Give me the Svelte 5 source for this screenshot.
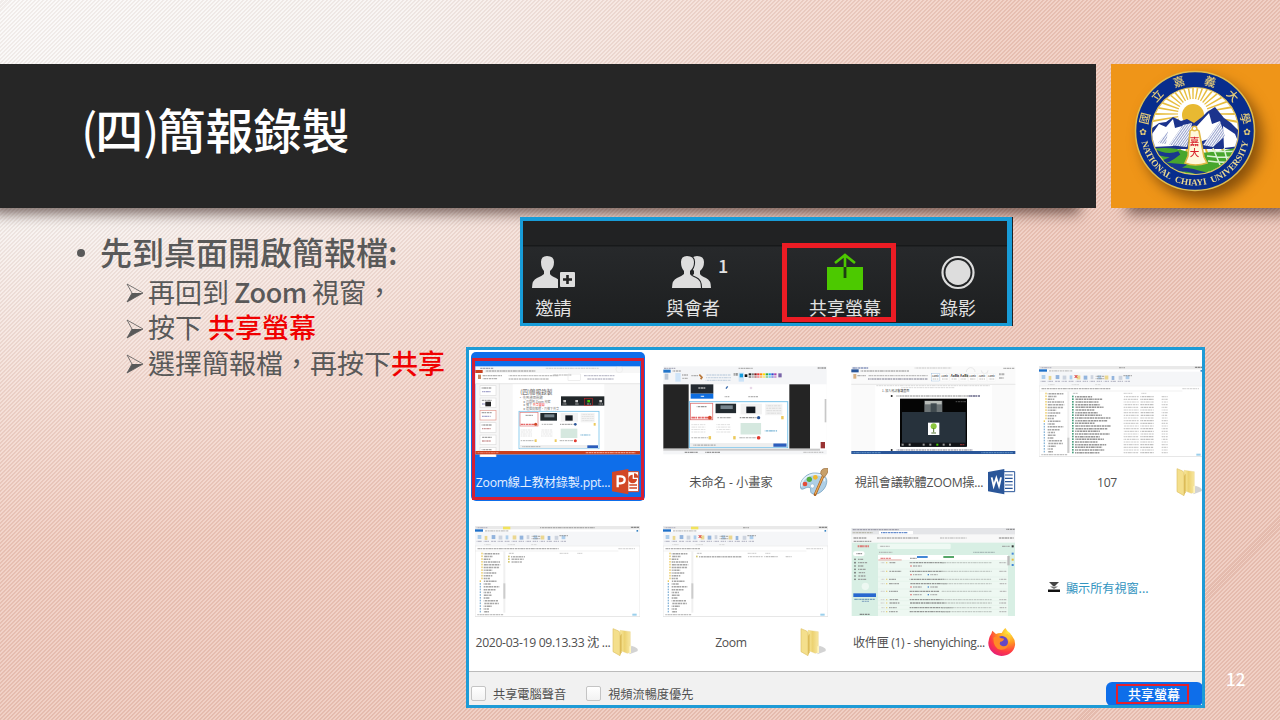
<script>
  const range = (n) => Array.from({ length: n }, (_, i) => i);
  const frac = (n) => {
    const v = Math.sin(n * 12.9898) * 43758.5453;
    return v - Math.floor(v);
  };

  const rays = range(36).map((i) => i * 10);
  const seal = [
    { ch: '國', a: -76 },
    { ch: '立', a: -47 },
    { ch: '嘉', a: -18 },
    { ch: '義', a: 17 },
    { ch: '大', a: 47 },
    { ch: '學', a: 76 }
  ];

  const windows = [
    { kind: 'slides', label: 'Zoom線上教材錄製.ppt...', icon: 'ppt', selected: true, track: -0.22 },
    { kind: 'paint', label: '未命名 - 小畫家', icon: 'paint', track: 0 },
    { kind: 'word', label: '視訊會議軟體ZOOM操...', icon: 'word', track: -0.25 },
    { kind: 'files', label: '107', icon: 'folder', rows: 22, track: -0.3 },
    { kind: 'files', label: '2020-03-19 09.13.33 沈 ...', icon: 'folder', rows: 3, tab: true, track: -0.33 },
    { kind: 'files', label: 'Zoom', icon: 'folder', rows: 1, tab: true, track: -0.3 },
    { kind: 'mail', label: '收件匣 (1) - shenyiching...', icon: 'firefox', track: -0.38 }
  ];

  const swatches = ['#222', '#777', '#8b1a1a', '#e33', '#f80', '#fd0', '#3a4', '#1ad', '#34c', '#a4a'];
</script>

{#snippet micro(x, y, w, color = '#999', h = 4)}
  <line x1={x} y1={y} x2={x + w} y2={y} stroke={color} stroke-width={h} stroke-dasharray="6 1.500 9 1 4 2 7 1.500" stroke-dashoffset={frac(x + y) * 30} opacity=".75" />
{/snippet}

{#snippet person()}
  <path d="M15 3 q-6 0-6 6 q0 6 3 9 v3 q-2 2-7 4 q-5 2-5 10 h29 q0-8-5-10 q-5-2-6-4 v-3 q4-3 4-9 q0-6-7-6z" />
{/snippet}

{#snippet ribbon()}
  <rect x="0" y="17" width="495" height="42" fill="#f5f6f8" />
  {#each range(13) as i}
    <rect x={8 + i * 21} y={27 + frac(i) * 3} width={i % 3 === 1 ? 8 : 11} height="12" fill={['#9cc4e8', '#e8cf75', '#7ba4d6', '#c3ccd8'][i % 4]} opacity=".8" />
    {@render micro(5 + i * 21, 46, 16, '#aab')}
  {/each}
  {@render micro(170, 31, 27)}
  {@render micro(170, 38, 27)}
  {@render micro(253, 29, 26)}
  {@render micro(28, 56, 20, '#ccc', 3)}
  {@render micro(98, 56, 22, '#ccc', 3)}
  {@render micro(168, 56, 18, '#ccc', 3)}
{/snippet}

{#snippet smallCards(x, y, k)}
  <g transform={`translate(${x} ${y}) scale(${k})`}>
    <rect width="240" height="112" fill="#fff" stroke="#7cc5ec" stroke-width="2.5" />
    <rect x="3" y="4" width="54" height="40" fill="#fff" stroke="#d77" stroke-width="2" />
    {@render micro(18, 12, 24, '#777', 3)}
    {@render micro(4, 39, 50, '#d33', 4)}
    <rect x="64" y="5" width="50" height="23" fill="#222b30" />
    <rect x="76" y="9" width="30" height="9" fill="#76858e" />
    <rect x="125" y="5" width="52" height="26" fill="#f2f2f2" />
    <rect x="139" y="12" width="22" height="16" fill="#151b22" />
    <rect x="185" y="5" width="42" height="28" fill="#f3f3f3" />
    {#each range(4) as i}
      {@render micro(188, 10 + i * 6, 36, '#ccc', 2)}
      {@render micro(5, 56 + i * 6, 34, '#ccc', 2)}
      {@render micro(66, 56 + i * 6, 34, '#ccc', 2)}
    {/each}
    <rect x="125" y="52" width="50" height="28" fill="#d5e8df" />
    {@render micro(68, 39, 34, '#999', 3)}
    {@render micro(122, 39, 42, '#777', 3)}
    {@render micro(4, 88, 42, '#999', 3)}
    {@render micro(122, 88, 40, '#999', 3)}
    {@render micro(184, 71, 30, '#4a9bc7', 3)}
    <circle cx="50" cy="39" r="4.500" fill="#d24726" />
    <circle cx="169" cy="39" r="4" fill="#2a5699" />
    <circle cx="169" cy="88" r="4.500" fill="#e33b2e" />
    <rect x="224" y="35" width="6" height="8" fill="#ecc95b" />
    <rect x="47" y="84" width="6" height="8" fill="#ecc95b" />
    <rect x="107" y="84" width="6" height="8" fill="#ecc95b" />
    <rect x="2" y="101" width="236" height="10" fill="#eee" />
    {@render micro(10, 106, 54, '#999', 3)}
    <rect x="205" y="102" width="32" height="8" fill="#2a5dbd" />
  </g>
{/snippet}

{#snippet slidesThumb()}
  <rect width="495" height="264" fill="#f7f7f7" />
  {@render micro(14, 6, 40, '#889')}
  {@render micro(210, 6, 160, '#ccc')}
  <circle cx="432" cy="9" r="10" fill="none" stroke="#ddd" />
  <rect y="11" width="22" height="9" fill="#c8411f" />
  {@render micro(30, 14, 150, '#999')}
  <rect y="20" width="495" height="32" fill="#fff" />
  <rect x="8" y="25" width="9" height="13" fill="#c88a62" />
  {@render micro(22, 28, 58)}
  {@render micro(22, 37, 44)}
  {@render micro(100, 28, 150, '#aaa')}
  {@render micro(100, 38, 120, '#aaa')}
  {@render micro(232, 26, 56, '#bbb')}
  <rect x="278" y="23" width="38" height="19" fill="none" stroke="#ccc" />
  {@render micro(326, 28, 92, '#aab')}
  {@render micro(336, 38, 80, '#aab')}
  <path d="M0 52 H495 M72 52 V255" stroke="#ddd" stroke-width="2" />
  {#each range(6) as i}
    <rect x="14" y={58 + i * 37} width="48" height="29" fill="#fff" stroke={i === 2 ? '#e3958b' : '#ddd'} stroke-width="2" />
    {@render micro(19, 65 + i * 37, 30, '#888')}
    {@render micro(20, 76 + i * 37, 26, i > 2 ? '#b77' : '#88b')}
  {/each}
  <rect x="30" y="106" width="17" height="14" fill="#222" />
  <rect x="112" y="54" width="275" height="200" fill="#fff" />
  <text x="135" y="84" font-size="17" fill="#555">(四)簡報錄製</text>
  <text x="130" y="98" font-size="10" fill="#777">• 先到桌面開啟</text>
  <text x="143" y="109" font-size="9" fill="#777">➤再回到 Zoom 視窗</text>
  <text x="143" y="120" font-size="9" fill="#777">➤按下 <tspan fill="#e33">共享螢幕</tspan></text>
  <text x="143" y="131" font-size="9" fill="#777">➤選擇簡報檔，再按下共享</text>
  <rect x="257" y="90" width="130" height="28" fill="#22272a" />
  {#each range(4) as i}
    <rect x={264 + i * 36} y="101" width="8" height="7" fill={i === 2 ? '#4c0' : '#ccc'} />
    {@render micro(262 + i * 36, 113, 13, '#ccc', 3)}
  {/each}
  <rect x="328" y="97" width="23" height="20" fill="none" stroke="#d22" stroke-width="1.5" />
  {@render smallCards(131, 135, 1)}
  <rect y="254" width="495" height="10" fill="#c9401d" />
  {@render micro(4, 259, 66, '#e87')}
  {@render micro(330, 259, 150, '#fba')}
{/snippet}

{#snippet paintThumb()}
  <rect width="490" height="264" fill="#f4f5f7" />
  {@render micro(2, 6, 34, '#99a')}
  {@render micro(225, 6, 43, '#999')}
  {@render micro(463, 5, 25, '#777')}
  <rect y="10" width="22" height="9" fill="#2375c9" />
  {@render micro(28, 14, 26)}
  <rect x="36" y="20" width="16" height="26" fill="#cfe4f8" />
  <rect x="4" y="22" width="11" height="18" fill="#bcc8d8" />
  {@render micro(56, 26, 18)}
  {@render micro(56, 36, 18)}
  {@render micro(84, 28, 20)}
  <path d="M108 25l8 8-4 6" stroke="#b9793d" stroke-width="5" fill="none" />
  {#each range(3) as i}{@render micro(127, 26 + i * 8, 76, '#bcd')}{/each}
  {@render micro(211, 24, 14, '#777', 8)}
  <rect x="226" y="19" width="16" height="27" fill="#cbe3f8" />
  <rect x="229" y="22" width="10" height="11" fill="#149cdc" />
  <rect x="244" y="24" width="8" height="8" fill="#111" />
  {#each swatches as c, i}
    <rect x={256 + i * 8.5} y="21" width="7" height="6" fill={c} />
    <rect x={256 + i * 8.5} y="29" width="7" height="6" fill={c} opacity=".45" />
  {/each}
  <rect x="345" y="21" width="10" height="12" fill="#7965a8" />
  <rect y="54" width="490" height="197" fill="#fff" />
  <rect y="54" width="76" height="193" fill="#242424" />
  <rect x="378" y="54" width="62" height="193" fill="#242424" />
  <rect x="82" y="54" width="68" height="28" fill="#232a31" />
  {@render micro(105, 65, 21, '#ddd')}
  <rect x="82" y="82" width="68" height="15" fill="#0e6ee0" />
  {@render micro(111, 90, 12, '#fff')}
  <path d="M188 67l5-7" stroke="#36a" stroke-width="4" />
  {@render micro(184, 91, 14)}
  {@render micro(254, 91, 30)}
  <circle cx="263" cy="65" r="4" fill="#e8d8e8" />
  {@render smallCards(78, 106, 1.23)}
  <rect x="484" y="98" width="5" height="70" fill="#c8c8c8" />
  <rect x="472" y="227" width="13" height="19" fill="#933" />
  <rect y="247" width="470" height="6" fill="#c8c8c8" />
  {@render micro(64, 258, 40, '#777')}
  {@render micro(126, 258, 44, '#777')}
  {@render micro(420, 258, 60, '#bbb')}
{/snippet}

{#snippet wordThumb()}
  <rect width="492" height="264" fill="#fafafa" />
  {@render micro(2, 5, 50, '#67a')}
  {@render micro(190, 5, 110, '#ccc')}
  <path d="M345 17a13 13 0 0 1 26 0M390 12a10 10 0 1 0 20 0" fill="none" stroke="#ddd" stroke-width="2" />
  {@render micro(455, 6, 34, '#999')}
  <rect y="9" width="22" height="9" fill="#2a5699" />
  {@render micro(28, 14, 145)}
  <rect x="6" y="23" width="9" height="14" fill="#d9b184" />
  {@render micro(18, 28, 26)}
  {@render micro(50, 28, 180, '#aaa')}
  {@render micro(50, 38, 180, '#889')}
  {#each range(7) as i}
    <rect x={240 + i * 28} y="22" width="25" height="22" fill="#fff" stroke={i ? '#eee' : '#7ca9d6'} />
    <text x={242 + i * 28} y="31" font-size={i === 2 || i === 3 ? 10 : 8} font-weight={i === 2 || i === 3 ? 700 : 400} fill="#333">AaBb</text>
    {@render micro(244 + i * 28, 38, 17, '#aaa', 3)}
  {/each}
  {@render micro(443, 24, 16, '#999', 6)}
  {@render micro(443, 35, 16)}
  <path d="M0 54H492" stroke="#ddd" stroke-width="2" />
  <rect x="72" y="56" width="350" height="200" fill="#fff" />
  {@render micro(75, 58, 340, '#ccc', 3)}
  {@render micro(150, 64, 160, '#ccc', 3)}
  <text x="92" y="78" font-size="9" fill="#444">1. 加入視訊會議畫面</text>
  <circle cx="121" cy="89" r="3" fill="#222" />
  {@render micro(135, 89, 220, '#999', 5)}
  {@render micro(352, 89, 34, '#668', 6)}
  <rect x="146" y="97" width="201" height="144" fill="#050505" />
  <rect x="152" y="137" width="191" height="104" fill="#27323c" />
  <rect x="219" y="103" width="54" height="34" fill="#6d7476" />
  <rect x="221" y="104" width="50" height="10" fill="#b9bdb9" />
  <rect x="238" y="111" width="18" height="26" fill="#414b50" />
  <rect x="230" y="169" width="34" height="37" fill="#fff" />
  <circle cx="247" cy="180" r="9" fill="#8cc63f" />
  <path d="M247 185v13M240 200h14" stroke="#5b7835" stroke-width="3" />
  {@render micro(312, 106, 32, '#555')}
  <rect x="148" y="229" width="197" height="12" fill="#111418" />
  {#each [151, 172, 214, 234, 255, 274, 293] as x}<rect {x} y="232" width="6" height="6" fill={x === 255 ? '#4c0' : '#999'} />{/each}
  {@render micro(326, 235, 15, '#a33')}
  <circle cx="121" cy="251" r="3" fill="#222" />
  {@render micro(136, 251, 228, '#889', 5)}
  <rect y="254" width="492" height="9" fill="#2a5699" />
  {@render micro(4, 259, 85, '#69c')}
  {@render micro(390, 259, 95, '#69c')}
{/snippet}

{#snippet filesThumb(rows, tab)}
  <rect width="495" height="272" fill="#fff" stroke="#dcdcdc" stroke-width="2" />
  <rect width="495" height="10" fill="#e9e9e9" />
  {@render micro(5, 5, 32, '#aab')}
  {@render micro(rows === 3 ? 195 : 240, 5, rows === 3 ? 165 : 18, '#999')}
  {@render micro(466, 4, 26, '#666')}
  {#if tab}<rect x="84" y="2" width="22" height="8" fill="#f2e35c" />{/if}
  <rect y="10" width="24" height="10" fill="#1f71c9" />
  {@render micro(30, 15, 70, '#aaa')}
  <circle cx="487" cy="15" r="3" fill="#2578bd" />
  {@render ribbon()}
  {#if rows !== 3}<path d="M107 27l8 9M115 27l-8 9" stroke="#d33" stroke-width="3" />{/if}
  <path d="M0 60H495M0 75H430" stroke="#e3e3e3" stroke-width="1.5" />
  {@render micro(6, 68, rows === 3 ? 245 : rows === 1 ? 105 : 210, '#999')}
  {@render micro(430, 68, 50, '#ccc')}
  {#each range(22) as i}
    <rect x={i < 10 ? 19 : 14} y={80 + i * 8.3} width="4" height="5" fill={i < 11 ? '#eccb60' : '#8ab6d9'} />
    {@render micro(26, 83 + i * 8.3, 14 + frac(i * 3 + 1) * 36, '#888', 4.500)}
  {/each}
  <rect x="85" y="76" width="6" height="184" fill="#f0f0f0" />
  <rect x="85" y={rows === 22 ? 215 : 172} width="6" height="46" fill="#ccc" />
  {@render micro(100, 82, 16, '#aaa', 3)}
  {@render micro(254, 82, 26, '#bbb', 3)}
  {@render micro(306, 82, 16, '#bbb', 3)}
  {#each range(rows) as i}
    <rect x="99" y={89 + i * 8} width="5" height="5" fill={rows === 22 ? '#48a07e' : '#d4c870'} />
    {@render micro(108, 92 + i * 8, rows === 1 ? 128 : rows === 3 ? 42 - i * 4 : 48 + frac(i + 2) * 60, rows === 22 ? '#777' : '#999', 4.500)}
    {#if rows !== 3}
      {@render micro(254, 92 + i * 8, 45, '#bbb', 3.500)}
      {@render micro(304, 92 + i * 8, 40, '#aaa', 3.500)}
      {@render micro(368, 92 + i * 8, 18, '#bbb', 3.500)}
    {/if}
  {/each}
  {@render micro(6, 266, 80, '#aaa')}
  <rect x="472" y="263" width="13" height="6" fill="#9bd0ec" />
{/snippet}

{#snippet mailThumb()}
  <rect width="490" height="264" fill="#d8efe4" />
  <rect width="490" height="44" fill="#f8f8f8" />
  <rect width="490" height="19" fill="#e4e5e8" />
  {@render micro(3, 5, 138, '#889')}
  {@render micro(464, 4, 25, '#777')}
  {@render micro(3, 14, 60, '#aa9')}
  <rect x="82" y="9" width="102" height="10" fill="#fff" />
  {@render micro(88, 14, 80, '#36b')}
  {@render micro(4, 30, 40, '#888')}
  {@render micro(76, 30, 125, '#999')}
  {@render micro(265, 30, 80, '#bbb')}
  {@render micro(440, 30, 46, '#888')}
  {@render micro(4, 40, 55, '#888')}
  {@render micro(18, 55, 34, '#d55', 6)}
  <rect x="77" y="47" width="220" height="16" rx="3" fill="#eef9f3" />
  {@render micro(84, 55, 30, '#aaa')}
  {@render micro(450, 55, 25, '#999')}
  <rect x="4" y="70" width="35" height="14" rx="7" fill="#fff" />
  {@render micro(14, 77, 18, '#777')}
  {#each range(7) as i}
    <circle cx="10" cy={94 + i * 10} r="2.5" fill="#666" />
    {@render micro(19, 94 + i * 10, 16 + frac(i) * 14, '#888')}
  {/each}
  <circle cx="41" cy="175" r="11" fill="#edf8f2" />
  <rect x="5" y="196" width="68" height="11" fill="#2868cf" />
  {@render micro(8, 214, 62, '#58a')}
  {@render micro(30, 220, 22, '#79b')}
  {@render micro(24, 259, 30, '#666')}
  {@render micro(82, 73, 40, '#aaa')}
  {@render micro(364, 73, 65, '#9aa')}
  <rect x="79" y="81" width="390" height="183" fill="#eef8f2" />
  <rect x="79" y="81" width="390" height="16" fill="#fff" />
  <path d="M80 96H150" stroke="#e08a84" stroke-width="2.500" />
  {@render micro(85, 91, 34, '#d66')}
  {@render micro(175, 91, 20, '#888')}
  <rect x="196" y="84" width="32" height="6" fill="#4287d6" />
  <rect x="275" y="84" width="32" height="6" fill="#55a769" />
  {#each [104, 130, 154, 167, 190, 215, 225, 239, 251] as y, i}
    <path d={`M79 ${y - 7}H468`} stroke="#dce9e1" />
    <rect x="103" y={y - 2} width="4" height="4" fill="#e8d488" />
    {@render micro(87, y, 12, '#ccc')}
    {@render micro(112, y, 20 + frac(i) * 18, '#888')}
    {@render micro(174, y, 80 + frac(i + 3) * 50, '#777')}
    {@render micro(270, y, 150, '#b5bdb8')}
    {@render micro(443, y, 21, '#aaa')}
    {#if [0, 1, 3, 4].includes(i)}
      <rect x="176" y={y + 8} width="4" height="4" fill="#d66" />
      {@render micro(184, y + 10, 26, '#999')}
      {#if i}
        <rect x="228" y={y + 8} width="4" height="4" fill="#4787cc" />
        {@render micro(236, y + 10, 22, '#999')}
      {/if}
    {/if}
  {/each}
  <rect x="467" y="84" width="7" height="28" fill="#bbb" />
  {#each [[52, '#333'], [74, '#4387d8'], [92, '#e9b93b'], [108, '#4387d8']] as [y, c]}
    <rect x="480" {y} width="6" height="6" fill={c} />
  {/each}
{/snippet}

{#snippet appIcon(kind)}
  <svg class="app" viewBox="0 0 84 84">
    {#if kind === 'ppt'}
      <path d="M44 11h36v60H44z" fill="#fff" stroke="#d24726" stroke-width="3" />
      <path d="M62 20v13h13a13 13 0 1 1-13-13z" fill="#d24726" />
      <path d="M66 16a13 13 0 0 1 13 13H66z" fill="#d24726" />
      <path d="M52 51h23M52 60h23" stroke="#d24726" stroke-width="5" />
      <path d="M0 12L49 3v76L0 70z" fill="#d24726" />
      <path d="M17 58V25h9q12 0 12 10T26 46h-9" fill="none" stroke="#fff" stroke-width="7" />
    {:else if kind === 'word'}
      <path d="M44 11h36v60H44z" fill="#fff" stroke="#2a5699" stroke-width="3" />
      <path d="M51 21h23M51 31h23M51 41h23M51 51h23M51 61h23" stroke="#2a5699" stroke-width="3.500" />
      <path d="M0 12L49 3v76L0 70z" fill="#2a5699" />
      <path d="M11 28l6 26 8-24 8 24 6-26" fill="none" stroke="#fff" stroke-width="5.500" />
    {:else if kind === 'paint'}
      <path d="M2 60C-4 37 22 12 49 15c22 2 34 14 31 29-3 23-30 42-45 32-7-5 1-16-8-18S5 70 2 60z" fill="#aecfe6" stroke="#6795b6" stroke-width="2" />
      <path d="M5 56C2 37 24 18 47 19c20 0 28 9 26 21" fill="none" stroke="#e3f1fa" stroke-width="5" />
      <circle cx="15" cy="48" r="7" fill="#e34d3a" /><circle cx="28" cy="34" r="8" fill="#56ad3e" /><circle cx="46" cy="28" r="7" fill="#f1b92d" /><circle cx="37" cy="54" r="6" fill="#fff" stroke="#6795b6" />
      <path d="M73 16L45 80" stroke="#a65f20" stroke-width="8" stroke-linecap="round" />
      <path d="M72 18L46 77" stroke="#e9a854" stroke-width="4" stroke-linecap="round" />
      <path d="M62 17q-1-16 19-17 9 3-2 20l-7 9z" fill="#c8a06a" stroke="#92683d" stroke-width="2" />
    {:else if kind === 'folder'}
      <defs>
        <linearGradient id="fold" x2="1"><stop stop-color="#f9e99b" /><stop offset=".45" stop-color="#ecd272" /><stop offset="1" stop-color="#f8e7a0" /></linearGradient>
      </defs>
      <path d="M52 79L76 70Q84 61 58 53z" fill="#bbb" opacity=".65" />
      <path d="M24 7l31 4v62l-9 3-20-8z" fill="url(#fold)" stroke="#e3cb7a" />
      <path d="M3 2l17 7q4 3 4 9v65L3 71z" fill="#f4df8c" stroke="#dfc267" stroke-width="2" />
      <path d="M24 23l5-6v56l-5 9z" fill="#dcbc58" />
      <path d="M52 55h5v20h-5z" fill="#fff5bd" />
    {:else}
      <defs>
        <radialGradient id="fox" cx=".75" cy=".15" r="1"><stop stop-color="#ffed43" /><stop offset=".38" stop-color="#ff9a22" /><stop offset=".7" stop-color="#ff3b43" /><stop offset="1" stop-color="#df1686" /></radialGradient>
      </defs>
      <path d="M10 17l3-9 11 10q8-4 17-3 4-9 11-15 4 8 14 15 3 5 5 7 12 15 10 30c-3 22-22 32-41 32C17 84-4 61 2 38c1-9 4-16 8-21z" fill="url(#fox)" />
      <circle cx="42" cy="42" r="18" fill="#6547c6" />
      <path d="M16 29q12-7 22 1l10 2q-1 8-11 9-5 8 4 12 11 5 20-5-2 19-23 17-22-3-22-36z" fill="#ff8a27" />
      <path d="M44 24q18-1 20 19 5-17-6-26z" fill="#ffc435" />
    {/if}
  </svg>
{/snippet}

{#snippet arrow()}
  <svg viewBox="0 0 18 20"><path d="M1 1L17 10 1 19 6 10z" fill="none" stroke="#595959" stroke-width=".8" /><path d="M6 10H17L1 19z" fill="#595959" /></svg>
{/snippet}

<main class="slide">
  <header>
    <h1><span>(</span>四<span>)</span>簡報錄製</h1>
    <div class="brand">
      <svg class="emblem" viewBox="-62 -62 124 124">
        <defs>
          <clipPath id="disc"><circle r="43" /></clipPath>
          <pattern id="hatch" width="2" height="2" patternUnits="userSpaceOnUse" patternTransform="rotate(35)"><path d="M0 0V2" stroke="#31489d" stroke-width="1" /></pattern>
          <path id="arc" d="M-54.5 0A54.5 54.5 0 0 0 54.5 0" />
        </defs>
        <circle r="59.500" fill="#082d8d" stroke="#dfbd50" stroke-width="1.500" />
        <circle r="43.5" fill="#fff" stroke="#e3c35c" stroke-width="1.2" />
        <g clip-path="url(#disc)">
          {#each rays as a}<path d="M-.6-15L-1.2-50H1.2L.6-15z" fill="#e7bd3e" transform={`translate(-2 -17) rotate(${a})`} />{/each}
          <circle cx="-2" cy="-16" r="11" fill="#e8b932" />
          <path d="M-47 0L-36-8-29-9-22-14-14-10-8-12-1-8 7-14 12-19 20-24 29-13 36-8 46 2V18H-47z" fill="#1c348d" />
          <path d="M-43 3l7-10 7 3 7-8 2 9 7-2-9 20-21 1zM-6-4l8-1 12-13 3 11 8-3-2 15-16 5-8 11zM28-5l12 8 5 12-16 2z" fill="#fff" />
          <path d="M-26 14L-12-6-3-8-8 16zM8 14L25-10 30 5 18 16zM-37 12l10-12-2 13z" fill="#fff" />
          <path d="M-26 14L-12-6-3-8-8 16zM8 14L25-10 30 5 18 16zM-37 12l10-12-2 13z" fill="url(#hatch)" />
          <path d="M-46 18Q-24 15-10 20T45 16V46H-46z" fill="#48a62d" />
          <path d="M-43 19q15 8 27 3-11 9-22 11l24 2q-14 8-22 8 19-7 34-3 18 6 33 3" fill="none" stroke="#19378e" stroke-width="4" />
          <path d="M13 20q17 1 29 0M12 25q15 2 28 1M13 30q14 2 24 1M18 17l7 17M29 17l4 16" fill="none" stroke="#dcf3d3" stroke-width="1.5" />
        </g>
        <path d="M-5 0q5-4 9 0l5 26 3 6q-12 4-22 0l3-7z" fill="#fff8dc" stroke="#e1b947" stroke-width="1.6" />
        <circle cx="-.5" cy="-2.500" r="2.300" fill="#fff" stroke="#e1b947" stroke-width="1.4" />
        <text class="red" x="-.5" y="14" text-anchor="middle">嘉</text>
        <text class="red" x="-.5" y="24.500" text-anchor="middle">大</text>
        {#each seal as s}
          <text class="seal" text-anchor="middle" transform={`rotate(${s.a}) translate(0 -47.5)`}>{s.ch}</text>
        {/each}
        <text class="star" x="-52" y="4" text-anchor="middle">✿</text>
        <text class="star" x="52" y="4" text-anchor="middle">✿</text>
        <text class="ring" word-spacing="3"><textPath href="#arc" startOffset="11" textLength="149">NATIONAL CHIAYI UNIVERSITY</textPath></text>
      </svg>
    </div>
  </header>

  <div class="content">
    <section class="notes">
      <h2><i class="dot"></i>先到桌面開啟簡報檔:</h2>
      <ul>
        <li>{@render arrow()}再回到 <span class="latin">Zoom</span> 視窗，</li>
        <li>{@render arrow()}按下 <em>共享螢幕</em></li>
        <li>{@render arrow()}選擇簡報檔，再按下<em>共享</em></li>
      </ul>
    </section>

    <section class="shots">
      <div class="toolbar">
        <div class="tool"><svg width="44" height="38" viewBox="0 0 44 38"><g transform="translate(0 1)">{@render person()}</g><rect x="26" y="19" width="18" height="18" fill="#222426" /><rect x="28" y="20" width="15" height="15" rx="1" fill="#ddd" /><path d="M35.500 23v9M31 27.500h9" stroke="#222" stroke-width="2.6" /></svg><span>邀請</span></div>
        <div class="tool group"><svg width="44" height="38" viewBox="0 0 44 38"><g transform="translate(13 1)">{@render person()}</g><g transform="translate(3 1)" stroke="#222426" stroke-width="2.200" paint-order="stroke">{@render person()}</g></svg><span>與會者</span><b>1</b></div>
        <div class="tool share"><svg width="38" height="38" viewBox="0 0 38 38"><rect x="1" y="15" width="36" height="23" fill="#4cc900" /><path d="M19 15V3M9 11L19 3 29 11" fill="none" stroke="#4cc900" stroke-width="2.600" /><path d="M19 15V26" stroke="#1e3e12" stroke-width="2.800" /></svg><span>共享螢幕</span></div>
        <div class="tool"><svg width="38" height="38" viewBox="0 0 38 38"><circle cx="19" cy="20.500" r="15.500" fill="none" stroke="#ddd" stroke-width="2.200" /><circle cx="19" cy="20.500" r="12.500" fill="#ddd" /></svg><span>錄影</span></div>
      </div>

      <div class="picker">
        <div class="grid">
          {#each windows as w}
            <div class="card" class:selected={w.selected}>
              <svg class="thumb" viewBox="0 0 495 273">
                {#if w.kind === 'slides'}<g transform="translate(1 1)">{@render slidesThumb()}</g>
                {:else if w.kind === 'paint'}<g transform="translate(1 1)">{@render paintThumb()}</g>
                {:else if w.kind === 'word'}<g transform="translate(1 1)">{@render wordThumb()}</g>
                {:else if w.kind === 'mail'}<g transform="translate(2 6)">{@render mailThumb()}</g>
                {:else}{@render filesThumb(w.rows, w.tab)}{/if}
              </svg>
              <div class="caption"><span style:letter-spacing={`${w.track}px`}>{w.label}</span>{@render appIcon(w.icon)}</div>
            </div>
          {/each}
          <div class="more"><svg width="12" height="10" viewBox="0 0 12 10"><path d="M1 0H11L7 4H5z" fill="#444" /><path d="M2 4.500H10L6 7z" fill="#777" /><path d="M0 7.500H12V10H0z" fill="#111" /></svg>顯示所有視窗...</div>
        </div>
        <footer>
          <label><i></i>共享電腦聲音</label>
          <label><i></i>視頻流暢度優先</label>
          <button><span>共享螢幕</span></button>
        </footer>
      </div>
    </section>
    <span class="page">12</span>
  </div>
</main>

<style>
  :global(body) { margin: 0; overflow: hidden; }
  *, *::after { box-sizing: border-box; }
  .slide {
    width: 1280px;
    height: 720px;
    padding-top: 64px;
    overflow: hidden;
    font-family: "Noto Sans CJK TC", sans-serif;
    background:
      repeating-linear-gradient(135deg, rgba(255, 255, 255, .2) 0 1.41px, rgba(120, 70, 50, .07) 1.41px 2.83px),
      radial-gradient(ellipse 1400px 760px at 0 0, #faf9f8 0, #f7f3f1 28%, #f3d9d0 52%, #efc8bb 72%, #edc4b7 100%);
  }
  header { display: flex; gap: 15px; height: 144px; }
  h1 {
    position: relative;
    flex: none;
    width: 1096px;
    margin: 0;
    padding: 31px 0 0 81px;
    background: #262626;
    color: #fff;
    font-size: 48px;
    line-height: 66px;
    font-weight: 500;
    box-shadow: -12px 10px 12px -4px rgba(50, 25, 20, .6);
  }
  h1 span { margin-right: -2px; font-weight: 400; }
  .brand {
    width: 169px;
    padding: 5px 0 0 22px;
    background: #ef9518;
    box-shadow: 12px 10px 12px -4px rgba(50, 25, 20, .6);
  }
  .emblem { display: block; width: 124px; height: 124px; filter: drop-shadow(7px 8px 7px rgba(70, 35, 0, .6)); }
  .seal { font: 500 11.500px "Noto Sans CJK TC", sans-serif; fill: #e5cc78; }
  .star { font: 9px "DejaVu Sans", sans-serif; fill: #e5cc78; }
  .ring { font: 700 9.200px "Liberation Serif", serif; fill: #ead78f; }
  .red { font: 500 9.500px "Noto Sans CJK TC", sans-serif; fill: #d8202b; }

  .content { display: flex; height: 512px; }
  .notes { flex: none; width: 466px; padding: 19px 0 0 76px; color: #595959; white-space: nowrap; }
  h2 { display: flex; align-items: center; margin: 0; font-size: 32px; line-height: 48px; font-weight: 500; }
  .dot { width: 8px; height: 8px; margin: 3px 15px 0 1px; border-radius: 50%; background: #595959; }
  ul { margin: -1px 0 0; padding: 0 0 0 50px; list-style: none; }
  li { display: flex; align-items: center; height: 35.500px; font-size: 27px; line-height: 36px; white-space: pre; }
  li svg { width: 18px; height: 20px; margin: 3px 4px 0 0; }
  .latin { letter-spacing: -.4px; margin: 0 -1px; font-weight: 500; }
  em { font-style: normal; color: #f00000; font-weight: 500; }

  .shots { position: relative; flex: none; width: 739px; padding-top: 9px; }
  .toolbar {
    display: grid;
    grid-template-columns: 61px 218px 86px 140px;
    width: 492px;
    height: 109px;
    margin-left: 54px;
    padding-top: 31px;
    border: solid #189cd8;
    border-width: 4px 5px 3px 3px;
    background: linear-gradient(#212223 0 24px, #17191a 24px 25px, #27292b 26px, #1d1f20);
    box-shadow: 1px 0 #222;
    color: #e2e2e2;
  }
  .tool { position: relative; display: flex; flex-direction: column; align-items: center; font-size: 18px; line-height: 26px; white-space: nowrap; }
  .tool svg { flex: none; height: 38px; margin-bottom: 4px; fill: #ddd; overflow: visible; }
  .group svg { margin-left: -5px; }
  .tool b { position: absolute; left: 134px; top: 0; font-size: 18px; font-weight: 500; }
  .share::after { content: ""; position: absolute; left: -20px; top: -9px; width: 114px; height: 79px; border: 5px solid #ec1c24; }

  .picker {
    display: flex;
    flex-direction: column;
    width: 739px;
    height: 361px;
    margin-top: 21px;
    overflow: hidden;
    border: 3px solid #1e9bd6;
    background: #fff;
  }
  .grid { display: grid; grid-template-columns: repeat(4, 188px); grid-auto-rows: 160px; height: 321px; padding: 2px 0 0 2px; }
  .card { position: relative; width: 174px; height: 149px; padding: 14px 4px 0; border-radius: 5px; color: #505050; }
  .selected { background: #0e6eea; color: #e6f0ff; }
  .selected::after { content: ""; position: absolute; inset: 6px 1px 1px; border: 3px solid #d51f35; }
  .thumb { display: block; width: 165px; height: 91px; }
  .caption { display: flex; align-items: center; width: 166px; height: 28px; margin-top: 11px; font: 12.200px "Open Sans", "Noto Sans CJK TC", sans-serif; white-space: nowrap; }
  .caption span { display: flex; flex: none; justify-content: center; width: 136px; }
  .app { flex: none; width: 28px; height: 28px; margin-left: 1px; }
  .more { display: flex; align-items: center; gap: 6px; width: 130px; height: 24px; margin: 63px 0 0 13px; color: #3294c0; font-size: 12.100px; white-space: nowrap; }
  footer { display: flex; align-items: center; height: 34px; padding: 10px 0 0 2px; border-top: 1px solid #bbb; background: #f1f1f1; color: #505050; font-size: 12.200px; line-height: 18px; }
  label { display: flex; align-items: center; gap: 7px; margin-right: 20px; }
  label i { width: 15px; height: 15px; border: 1px solid #c4c4c4; border-radius: 2px; background: linear-gradient(#fff, #f2f2f2); }
  button {
    width: 97px;
    height: 24px;
    margin: 0 -1px 0 auto;
    padding: 2px 14px 2px 10px;
    border: 0;
    border-radius: 6px;
    background: #0e6eea;
    color: #fff;
    font: 500 13px/15px "Noto Sans CJK TC", sans-serif;
  }
  button span { display: block; height: 20px; padding-left: 3px; border: 2px solid #e3202d; }
  .page { margin: 459px 0 0 21px; color: #fff; font-size: 17px; line-height: 24px; font-weight: 500; }
</style>
